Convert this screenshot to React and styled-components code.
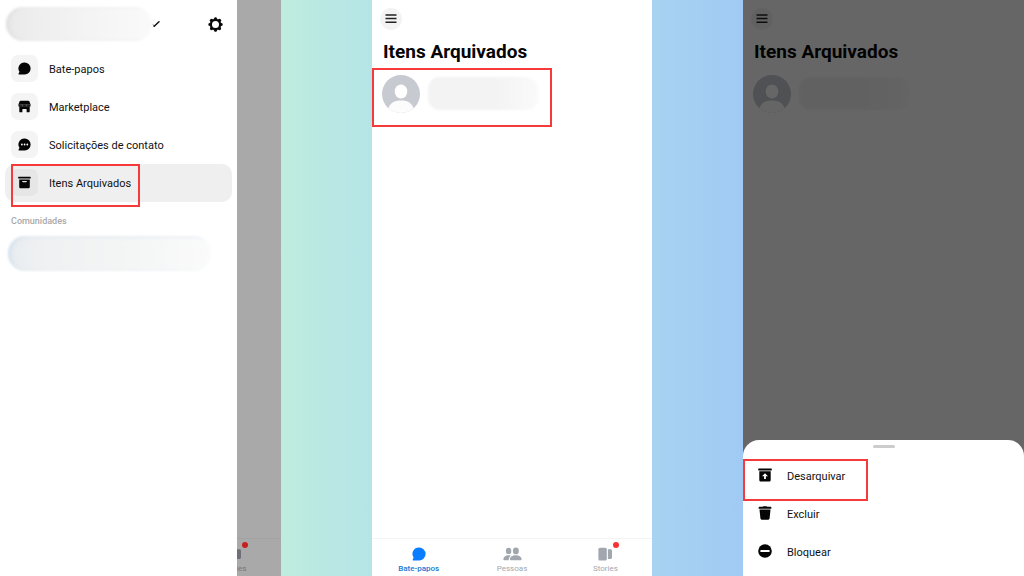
import React from "react";
import styled, { createGlobalStyle, css } from "styled-components";

const GlobalStyle = createGlobalStyle`
  *, *::before, *::after { box-sizing: border-box; }
  body {
    margin: 0;
    font-family: Roboto, "Liberation Sans", sans-serif;
    color: #111;
  }
  button {
    margin: 0;
    padding: 0;
    border: 0;
    background: none;
    font: inherit;
    color: inherit;
    text-align: left;
    cursor: pointer;
  }
  svg { display: block; flex: none; }
  h1, h2, p { margin: 0; }
`;

const Board = styled.main`
  display: grid;
  grid-template-columns: 281fr 91fr 280fr 91fr 281fr;
  min-height: 100vh;
  background: linear-gradient(90deg, #bfeddd 27%, #bae9e3 31%, #b4e4e6 37%, #a8d3f1 63%, #a0caf4 73%);
`;

const Phone = styled.section`
  position: relative;
  grid-column: ${(p) => p.$column};
  display: flex;
  flex-direction: ${(p) => (p.$row ? "row" : "column")};
  min-width: 0;
  background: #fff;
`;

const Drawer = styled.div`
  flex: 1;
  min-width: 0;
  background: #fff;
`;

const DrawerHeader = styled.header`
  display: flex;
  align-items: center;
  height: 50px;
  padding: 0 14px 2px 6px;
`;

const Smudge = styled.div`
  width: ${(p) => p.$width}px;
  height: ${(p) => p.$height}px;
  border-radius: ${(p) => p.$radius}px;
  background: ${(p) => p.$fill};
  box-shadow: ${(p) => p.$edge || "none"};
  filter: blur(1px);
`;

const IconButton = styled.button`
  display: grid;
  place-items: center;
  width: ${(p) => p.$size}px;
  height: ${(p) => p.$size}px;
  border-radius: 50%;
  background: ${(p) => p.$fill || "none"};
  ${(p) => p.$end && css`margin-left: auto;`}
`;

const MenuList = styled.nav`
  display: flex;
  flex-direction: column;
  padding: 0 5px;
`;

const MenuItem = styled.button`
  position: relative;
  display: flex;
  align-items: flex-start;
  gap: 11px;
  height: 38px;
  padding: 5px 6px 0;
  border-radius: 10px;
  font-size: 11px;
  line-height: 29px;
  background: ${(p) => (p.$active ? "#efefef" : "none")};
`;

const IconTile = styled.span`
  display: grid;
  place-items: center;
  width: 27px;
  height: 27px;
  border-radius: 7px;
  background: ${(p) => (p.$active ? "#e6e6e6" : "#f4f4f4")};
`;

const Marker = styled.span`
  position: absolute;
  top: ${(p) => p.$top}px;
  left: ${(p) => p.$left}px;
  width: ${(p) => p.$width}px;
  height: ${(p) => p.$height}px;
  border: 2px solid #f6393b;
  pointer-events: none;
`;

const GroupTitle = styled.h2`
  padding: 13px 11px 9px;
  font-size: 9px;
  font-weight: 500;
  line-height: 12px;
  color: #a9a9a9;
`;

const Community = styled.div`
  padding: 0 8px;
`;

const Backdrop = styled.div`
  display: flex;
  flex-direction: column;
  justify-content: flex-end;
  width: 44px;
  overflow: hidden;
  background: #a9a9a9;
`;

const TabBar = styled.nav`
  display: flex;
  justify-content: flex-end;
  height: 38px;
  margin-top: auto;
  border-top: 1px solid ${(p) => (p.$dim ? "#a2a2a2" : "#f3f3f3")};
`;

const Tab = styled.button`
  display: flex;
  flex: ${(p) => (p.$fixed ? "0 0 94px" : "1")};
  flex-direction: column;
  align-items: center;
  gap: 3px;
  padding-top: 8px;
  font-size: 8px;
  font-weight: ${(p) => (p.$active ? 500 : 400)};
  line-height: 10px;
  color: ${(p) => (p.$active ? "#1878d2" : p.$dim ? "#74777c" : "#a3a7ae")};
`;

const TabIcon = styled.span`
  position: relative;
  display: block;
`;

const Dot = styled.span`
  position: absolute;
  top: -5px;
  right: -7px;
  width: 6px;
  height: 6px;
  border-radius: 50%;
  background: ${(p) => (p.$dim ? "#c8201f" : "#fa3233")};
`;

const TopBar = styled.header`
  padding: 8px 8px 0;
`;

const Title = styled.h1`
  padding: 10px 11px 0;
  font-size: 19px;
  font-weight: 700;
  line-height: 24px;
  color: #050505;
  white-space: nowrap;
`;

const Conversation = styled.button`
  position: relative;
  display: flex;
  align-items: center;
  gap: 8px;
  height: 59px;
  margin-top: 4px;
  padding: 0 10px 8px;
`;

const Shade = styled.div`
  position: absolute;
  inset: 0;
  background: rgba(0, 0, 0, 0.6);
`;

const Sheet = styled.div`
  position: relative;
  display: flex;
  flex-direction: column;
  margin-top: auto;
  padding: 5px 0;
  border-radius: 16px 16px 0 0;
  background: #fff;
`;

const Handle = styled.span`
  align-self: center;
  width: 22px;
  height: 3px;
  margin-bottom: 9px;
  border-radius: 2px;
  background: #ccc;
`;

const SheetAction = styled.button`
  position: relative;
  display: flex;
  align-items: flex-start;
  gap: 15px;
  height: 38px;
  padding: 11px 15px 0;
  font-size: 11px;
  line-height: 17px;
`;

const GearIcon = () => (
  <svg width="15" height="15" viewBox="-8 -8 16 16" aria-hidden="true">
    <circle r="4.9" fill="none" stroke="#0a0a0a" strokeWidth="2.3" />
    {[0, 45, 90, 135, 180, 225, 270, 315].map((a) => (
      <path key={a} d="M-2.2-5.2L-1.1-7.4Q0-8 1.1-7.4L2.2-5.2Z" fill="#0a0a0a" transform={`rotate(${a})`} />
    ))}
  </svg>
);

const PenStroke = () => (
  <svg width="9" height="9" viewBox="0 0 9 9" aria-hidden="true">
    <path d="M0 3.6Q1 6 2 7L3.4 6L2 5Z" fill="#888" />
    <path d="M2.2 6.3L7 1.8" stroke="#111" strokeWidth="1.5" strokeLinecap="round" />
  </svg>
);

const BubbleIcon = ({ size = 13, fill = "#050505", dots }) => (
  <svg width={size} height={size} viewBox="0 0 14 14" aria-hidden="true">
    <path
      d="M7.2.6a6.4 6.4 0 0 1 0 12.8H1.3c-.6 0-.9-.5-.6-1l.9-1.800A6.400 6.400 0 0 1 7.200.6Z"
      fill={fill}
    />
    {dots && [4.2, 7.1, 10].map((x) => <circle key={x} cx={x} cy="7" r=".95" fill="#fff" />)}
  </svg>
);

const StoreIcon = () => (
  <svg width="13" height="13" viewBox="0 0 14 14" aria-hidden="true">
    <path
      d="M2.900.8h8.200c.6 0 1 .3 1.200.8l1.200 3.200v1.700c0 .5-.3.8-.8.8H1.300c-.5 0-.8-.3-.8-.8V4.800L1.700 1.600C1.900 1.100 2.300.8 2.900.8Z"
      fill="#050505"
    />
    <path d="M.8 5.200h12.400M4.700 5v2.300M9.300 5v2.300" stroke="#f4f4f4" strokeWidth=".35" />
    <path d="M1.400 7h11.200v5.300c0 .6-.4 1-1 1H9.300V10.200c0-.4-.2-.6-.6-.6H5.300c-.4 0-.6.200-.6.600v3.100H2.400c-.6 0-1-.4-1-1Z" fill="#050505" />
  </svg>
);

const ArchiveIcon = () => (
  <svg width="13" height="13" viewBox="0 0 14 14" aria-hidden="true">
    <rect x=".2" y=".9" width="13.4" height="1.9" rx=".4" fill="#050505" />
    <path d="M1.300 3.800h11.400v7.800c0 1-.7 1.700-1.700 1.700H3c-1 0-1.700-.7-1.700-1.700Z" fill="#050505" />
    <path d="M4.500 5.400h5v.3c0 .7-.4 1.100-1 1.100h-3c-.6 0-1-.4-1-1.100Z" fill="#e6e6e6" />
  </svg>
);

const UnarchiveIcon = () => (
  <svg width="14" height="14" viewBox="0 0 14 14" aria-hidden="true">
    <rect x=".2" y=".6" width="13.6" height="1.8" rx=".4" fill="#050505" />
    <path d="M1.300 3.300h11.400v8.600c0 1-.7 1.700-1.700 1.700H3c-1 0-1.700-.7-1.700-1.700Z" fill="#050505" />
    <path d="M7 5.200l3 3H7.900v2.900H6.100V8.200H4Z" fill="#fff" />
  </svg>
);

const TrashIcon = () => (
  <svg width="14" height="14" viewBox="0 0 14 14" aria-hidden="true">
    <path d="M4.700.8C4.800.4 5.200.2 5.600.2h2.800c.4 0 .8.200.9.600h2.900c.6 0 1.200.4 1.200 1v.9H.6v-.9c0-.6.600-1 1.200-1Z" fill="#050505" />
    <path d="M1.500 3.400h11l-.9 8.800c-.1.900-.8 1.500-1.700 1.500H4.100c-.9 0-1.600-.6-1.700-1.500Z" fill="#050505" />
  </svg>
);

const BlockIcon = () => (
  <svg width="14" height="14" viewBox="0 0 14 14" aria-hidden="true">
    <circle cx="7" cy="7" r="6.8" fill="#050505" />
    <rect x="2.4" y="6" width="9.2" height="2" rx=".6" fill="#fff" />
  </svg>
);

const MenuIcon = () => (
  <svg width="12" height="10" viewBox="0 0 12 10" aria-hidden="true">
    <path d="M.5 1h11M.5 4.600h11M.5 8.200h11" stroke="#222" strokeWidth="1.5" />
  </svg>
);

const PeopleIcon = () => (
  <svg width="19" height="14" viewBox="0 0 19 14" fill="#a1a6af" aria-hidden="true">
    <ellipse cx="5.6" cy="3.9" rx="2.7" ry="3.2" />
    <ellipse cx="12.9" cy="3.9" rx="3" ry="3.4" />
    <path d="M.4 12.400C.4 10 2.600 8.300 5.400 8.300c.9 0 1.700.1 2.400.4-1.300.9-2 2.300-2.100 4.500H1.200c-.5 0-.8-.3-.8-.8Z" />
    <path d="M6.900 12.200c.1-2.400 2.500-4 5.800-4s5.900 1.600 5.900 4.100c0 .6-.3.900-.8.900H7.700c-.5 0-.8-.4-.8-1Z" />
  </svg>
);

const StoriesIcon = ({ fill = "#a1a6af" }) => (
  <svg width="14" height="14" viewBox="0 0 14 14" fill={fill} aria-hidden="true">
    <rect x=".4" y=".8" width="8.4" height="12.6" rx="1.5" />
    <path d="M9.900 2.200h2.600c.9 0 1.500.6 1.500 1.400v7c0 .8-.6 1.400-1.500 1.400H9.900Z" />
  </svg>
);

const AvatarIcon = () => (
  <svg width="38" height="38" viewBox="0 0 38 38" aria-hidden="true">
    <defs>
      <clipPath id="avatar-clip">
        <circle cx="19" cy="19" r="19" />
      </clipPath>
    </defs>
    <g clipPath="url(#avatar-clip)">
      <rect width="38" height="38" fill="#c7cad1" />
      <ellipse cx="19" cy="16.5" rx="6.3" ry="7" fill="#fff" />
      <path d="M6 34C8 28 12 25.500 19 25.500S30 28 32 34V40H6Z" fill="#fcfcfd" />
    </g>
  </svg>
);

const StoriesTab = ({ dim, fixed }) => (
  <Tab $dim={dim} $fixed={fixed}>
    <TabIcon>
      <StoriesIcon fill={dim ? "#6d7076" : undefined} />
      <Dot $dim={dim} />
    </TabIcon>
    Stories
  </Tab>
);

const ArchivedHeader = ({ marked }) => (
  <>
    <TopBar>
      <IconButton $size={22} $fill="#f3f3f3" aria-label="Menu">
        <MenuIcon />
      </IconButton>
    </TopBar>
    <Title>Itens Arquivados</Title>
    <Conversation aria-label="Conversa arquivada">
      <AvatarIcon />
      <Smudge $width={110} $height={33} $radius={12} $fill="linear-gradient(90deg, #f3f3f3, #f3f3f3 60%, #fafafa)" />
      {marked && <Marker $top={0} $left={0} $width={180} $height={59} />}
    </Conversation>
  </>
);

const menuItems = [
  { label: "Bate-papos", icon: <BubbleIcon /> },
  { label: "Marketplace", icon: <StoreIcon /> },
  { label: "Solicitações de contato", icon: <BubbleIcon dots /> },
  { label: "Itens Arquivados", icon: <ArchiveIcon />, active: true },
];

const actions = [
  { label: "Desarquivar", icon: <UnarchiveIcon />, marked: true },
  { label: "Excluir", icon: <TrashIcon /> },
  { label: "Bloquear", icon: <BlockIcon /> },
];

export default function App() {
  return (
    <>
      <GlobalStyle />
      <Board>
        <Phone $column={1} $row>
          <Drawer>
            <DrawerHeader>
              <Smudge
                $width={146}
                $height={34}
                $radius={17}
                $fill="linear-gradient(90deg, #e9e9e9, #eeeeee 20%, #f3f3f3 50%, #fafafa)"
                $edge="inset 4px 0 5px -2px #dcdcdc"
              />
              <PenStroke />
              <IconButton $size={15} $end aria-label="Configurações">
                <GearIcon />
              </IconButton>
            </DrawerHeader>
            <MenuList>
              {menuItems.map((item) => (
                <MenuItem key={item.label} $active={item.active}>
                  <IconTile $active={item.active}>{item.icon}</IconTile>
                  {item.label}
                  {item.active && <Marker $top={0} $left={6} $width={129} $height={43} />}
                </MenuItem>
              ))}
            </MenuList>
            <GroupTitle>Comunidades</GroupTitle>
            <Community>
              <Smudge
                $width={203}
                $height={35}
                $radius={17}
                $fill="linear-gradient(90deg, #e9edf0, #f0f1f2 20%, #f4f5f5 60%, #fbfbfb)"
                $edge="inset 4px 1px 6px -3px #c5d8ea"
              />
            </Community>
          </Drawer>
          <Backdrop>
            <TabBar $dim>
              <StoriesTab dim fixed />
            </TabBar>
          </Backdrop>
        </Phone>

        <Phone $column={3}>
          <ArchivedHeader marked />
          <TabBar>
            <Tab $active>
              <BubbleIcon size={14} fill="#0a7cff" />
              Bate-papos
            </Tab>
            <Tab>
              <PeopleIcon />
              Pessoas
            </Tab>
            <StoriesTab />
          </TabBar>
        </Phone>

        <Phone $column={5}>
          <ArchivedHeader />
          <Shade />
          <Sheet>
            <Handle />
            {actions.map((action) => (
              <SheetAction key={action.label}>
                {action.icon}
                {action.label}
                {action.marked && <Marker $top={2} $left={0} $width={125} $height={42} />}
              </SheetAction>
            ))}
          </Sheet>
        </Phone>
      </Board>
    </>
  );
}
